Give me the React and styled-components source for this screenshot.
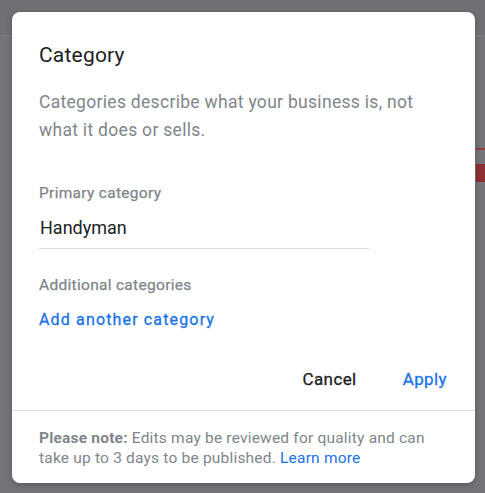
import React from "react";
import styled, { createGlobalStyle } from "styled-components";

const GlobalStyle = createGlobalStyle`
  html, body {
    margin: 0;
    padding: 0;
  }
  body {
    font-family: Roboto, "Liberation Sans", Arial, sans-serif;
    background: #747578;
  }
`;

const Page = styled.div`
  position: relative;
  width: 485px;
  height: 493px;
  overflow: hidden;
  background: #747578;
`;

const AppHeader = styled.div`
  height: 35px;
  background: #707174;
  border-bottom: 1px solid #7e7f82;
`;

const SideStrip = styled.div`
  display: flex;
  flex-direction: column;
  align-items: flex-end;
  gap: 14px;
  padding-top: 112px;
`;

const RedMark = styled.div`
  width: 9px;
  height: ${(p) => p.h}px;
  background: ${(p) => p.c};
`;

const Overlay = styled.div`
  position: absolute;
  inset: 0;
  padding: 12px 10px 10px 12px;
`;

const Dialog = styled.div`
  width: 463px;
  height: 471px;
  background: #fff;
  border-radius: 8px;
  box-shadow: 0 2px 6px rgba(0, 0, 0, 0.25);
  display: flex;
  flex-direction: column;
  overflow: hidden;
`;

const Body = styled.div`
  padding: 29px 27px 0 27px;
  flex: 1;
  display: flex;
  flex-direction: column;
`;

const Title = styled.h2`
  margin: 0;
  font-size: 21px;
  line-height: 28px;
  font-weight: 400;
  letter-spacing: 0.2px;
  color: #202124;
`;

const Description = styled.p`
  margin: 19px 0 0;
  font-size: 17.5px;
  line-height: 28px;
  letter-spacing: 0.3px;
  color: #80868b;
  max-width: 400px;
`;

const Label = styled.div`
  margin-top: ${(p) => p.top}px;
  font-size: 15.5px;
  line-height: 20px;
  font-weight: 400;
  letter-spacing: 0.3px;
  -webkit-text-stroke: 0.25px #80868b;
  color: #80868b;
`;

const Field = styled.div`
  width: 329px;
  margin-top: 14px;
  padding: 0 0 9px 1px;
  border-bottom: 1px solid #dadce0;
  font-size: 18px;
  line-height: 22px;
  color: #202124;
`;

const LinkButton = styled.a`
  margin-top: 15px;
  font-size: 16px;
  line-height: 20px;
  font-weight: 400;
  letter-spacing: 1.15px;
  -webkit-text-stroke: 0.3px #1a73e8;
  color: #1a73e8;
  cursor: pointer;
`;

const Actions = styled.div`
  margin-top: 38px;
  display: flex;
  justify-content: flex-end;
  gap: 46px;
  padding-right: 1px;
`;

const ActionButton = styled.button`
  border: none;
  background: none;
  padding: 0;
  font-family: inherit;
  font-size: 17px;
  line-height: 22px;
  font-weight: 400;
  letter-spacing: 0.4px;
  color: ${(p) => (p.primary ? "#1a73e8" : "#202124")};
  -webkit-text-stroke: 0.3px ${(p) => (p.primary ? "#1a73e8" : "#202124")};
  cursor: pointer;
`;

const Footer = styled.div`
  border-top: 1px solid #e0e0e0;
  padding: 17px 27px 15px;
  font-size: 15.5px;
  line-height: 20px;
  letter-spacing: 0.2px;
  color: #80868b;

  p {
    margin: 0;
    max-width: 396px;
  }

  b {
    font-weight: 700;
  }

  a {
    color: #1a73e8;
    cursor: pointer;
  }
`;

const App = () => {
  return (
    <Page>
      <GlobalStyle />
      <AppHeader />
      <SideStrip>
        <RedMark h={2} c="#9c3a3a" />
        <RedMark h={18} c="#8e2f33" />
      </SideStrip>
      <Overlay>
        <Dialog>
          <Body>
            <Title>Category</Title>
            <Description>
              Categories describe what your business is, not what it does or
              sells.
            </Description>
            <Label top={39}>Primary category</Label>
            <Field>Handyman</Field>
            <Label top={26}>Additional categories</Label>
            <LinkButton>Add another category</LinkButton>
            <Actions>
              <ActionButton>Cancel</ActionButton>
              <ActionButton primary>Apply</ActionButton>
            </Actions>
          </Body>
          <Footer>
            <p>
              <b>Please note:</b> Edits may be reviewed for quality and can
              take up to 3 days to be published. <a>Learn more</a>
            </p>
          </Footer>
        </Dialog>
      </Overlay>
    </Page>
  );
};

export default App;
